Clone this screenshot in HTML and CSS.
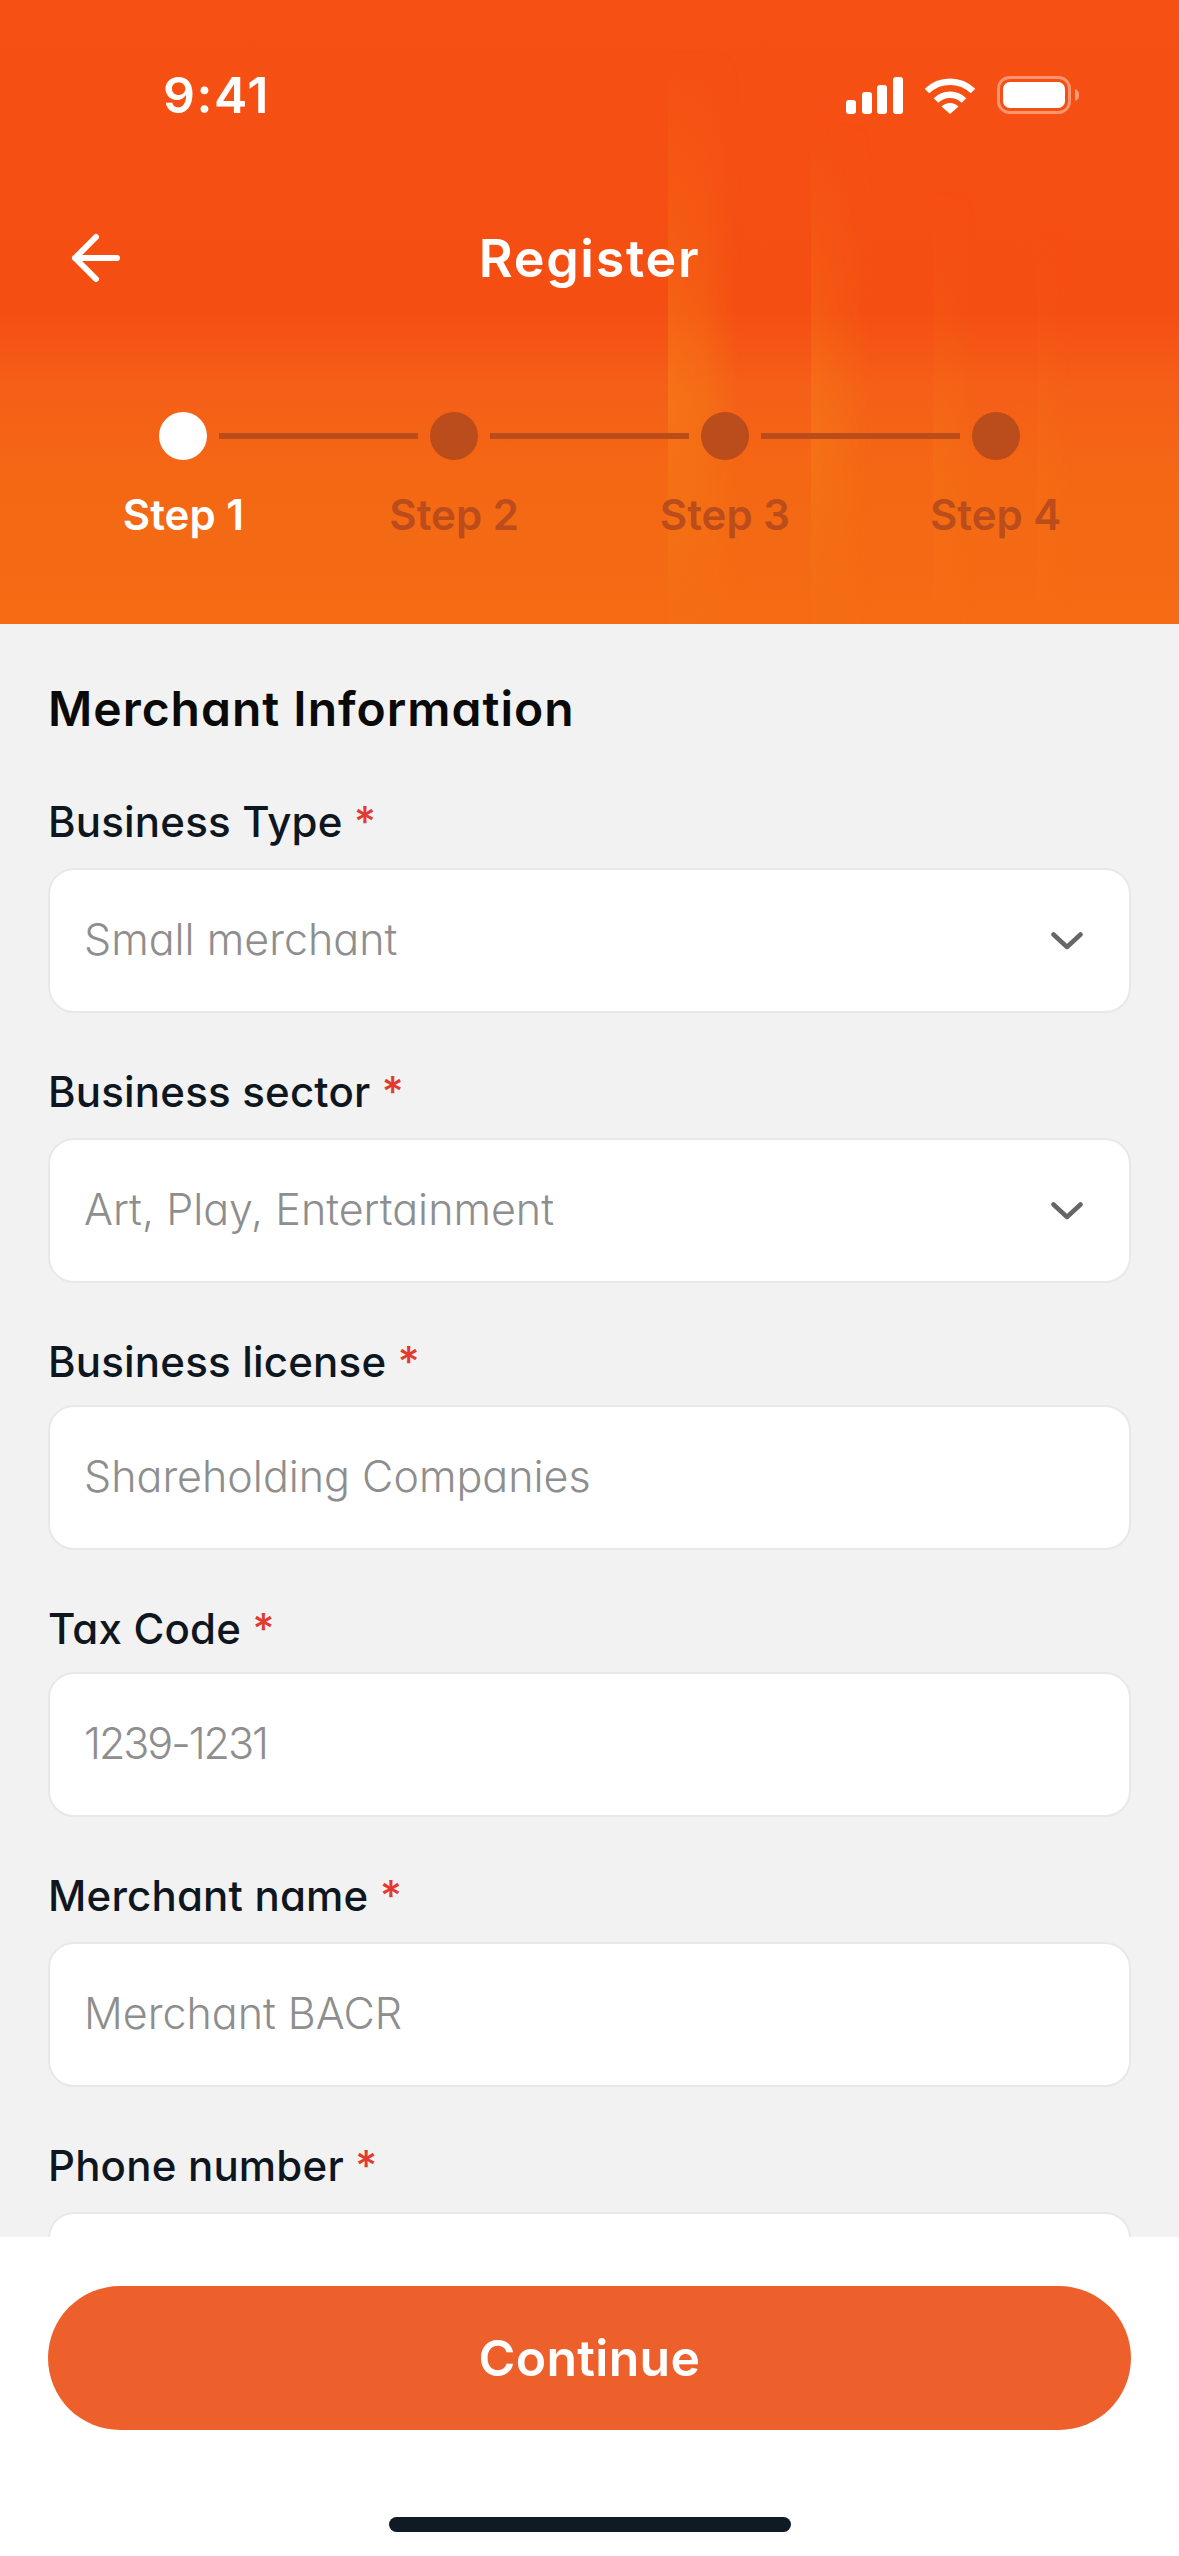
FILE: index.html

```html
<!DOCTYPE html>
<html lang="en">

<head>
    <meta charset="UTF-8">
    <title>Register</title>
    <link rel="stylesheet" href="styles.css">
</head>

<body>
    <div class="screen">
        <header class="hero">
            <div class="streak streak-1"></div>
            <div class="streak streak-2"></div>
            <div class="streak streak-3"></div>
            <div class="streak streak-4"></div>

            <div class="status-bar">
                <span class="time">9:41</span>
                <div class="status-icons">
                    <svg width="57" height="37" viewBox="0 0 57 37" fill="#fff">
                        <rect x="0" y="23" width="10" height="14" rx="3" />
                        <rect x="16" y="15" width="10" height="22" rx="3" />
                        <rect x="31" y="8" width="10" height="29" rx="3" />
                        <rect x="47" y="0" width="10" height="37" rx="3" />
                    </svg>
                    <svg width="52" height="37" viewBox="0 0 52 37">
                        <path d="M3 14 A 33 33 0 0 1 49 14" fill="none" stroke="#fff" stroke-width="6.5" />
                        <path d="M12 23.5 A 20 20 0 0 1 40 23.5" fill="none" stroke="#fff" stroke-width="6.5" />
                        <path d="M17.5 29.5 A 12 12 0 0 1 34.5 29.5 L26 37 Z" fill="#fff" />
                    </svg>
                    <svg width="82" height="38" viewBox="0 0 82 38">
                        <rect x="1.5" y="1.5" width="71" height="35" rx="11" fill="none" stroke="#fff" stroke-opacity="0.4" stroke-width="3" />
                        <rect x="6" y="6" width="62" height="26" rx="7" fill="#fff" />
                        <path d="M78 13 C 81 14 82 16 82 19 C 82 22 81 24 78 25 Z" fill="#fff" fill-opacity="0.45" />
                    </svg>
                </div>
            </div>

            <div class="nav">
                <svg class="back" width="50" height="50" viewBox="0 0 50 50" fill="none" stroke="#fff" stroke-width="6" stroke-linecap="round" stroke-linejoin="round">
                    <path d="M46 25 H4 M25 4 L4 25 L25 46" />
                </svg>
                <h1 class="nav-title">Register</h1>
            </div>

            <div class="stepper">
                <div class="dots">
                    <span class="dot dot-active"></span>
                    <span class="line"></span>
                    <span class="dot"></span>
                    <span class="line"></span>
                    <span class="dot"></span>
                    <span class="line"></span>
                    <span class="dot"></span>
                </div>
                <div class="step-labels">
                    <span class="step-label step-label-active">Step 1</span>
                    <span class="step-label">Step 2</span>
                    <span class="step-label">Step 3</span>
                    <span class="step-label">Step 4</span>
                </div>
            </div>
        </header>

        <main class="form">
            <h2 class="form-title">Merchant Information</h2>

            <div class="field first">
                <div class="label">Business Type <span class="req">*</span></div>
                <div class="input">
                    <span>Small merchant</span>
                    <svg class="chevron" width="32" height="18" viewBox="0 0 32 18" fill="none" stroke="#666" stroke-width="4.5" stroke-linecap="round" stroke-linejoin="round">
                        <path d="M2.5 2.5 L16 15 L29.5 2.5" />
                    </svg>
                </div>
            </div>

            <div class="field">
                <div class="label">Business sector <span class="req">*</span></div>
                <div class="input">
                    <span>Art, Play, Entertainment</span>
                    <svg class="chevron" width="32" height="18" viewBox="0 0 32 18" fill="none" stroke="#666" stroke-width="4.5" stroke-linecap="round" stroke-linejoin="round">
                        <path d="M2.5 2.5 L16 15 L29.5 2.5" />
                    </svg>
                </div>
            </div>

            <div class="field tight">
                <div class="label">Business license <span class="req">*</span></div>
                <div class="input"><span>Shareholding Companies</span></div>
            </div>

            <div class="field tight">
                <div class="label">Tax Code <span class="req">*</span></div>
                <div class="input"><span class="digits">1239-1231</span></div>
            </div>

            <div class="field">
                <div class="label">Merchant name <span class="req">*</span></div>
                <div class="input"><span>Merchant BACR</span></div>
            </div>

            <div class="field">
                <div class="label">Phone number <span class="req">*</span></div>
                <div class="input"></div>
            </div>
        </main>

        <footer class="footer">
            <button class="continue">Continue</button>
            <div class="home-bar"></div>
        </footer>
    </div>
</body>

</html>
```

FILE: styles.css

```css
* {
    margin: 0;
    padding: 0;
    box-sizing: border-box;
}

body {
    width: 1179px;
    height: 2556px;
    overflow: hidden;
    font-family: Inter, "Noto Sans", sans-serif;
    font-feature-settings: "cv11";
    background: #f2f2f2;
}

.screen {
    display: flex;
    flex-direction: column;
    height: 2556px;
}

/* orange header */
.hero {
    position: relative;
    height: 624px;
    flex: none;
    background: linear-gradient(180deg, #f65013 0%, #f54e13 50%, #f55f18 62%, #f46813 78%, #f56c15 100%);
    overflow: hidden;
}

.streak {
    position: absolute;
    bottom: 0;
    -webkit-mask-image: linear-gradient(180deg, transparent 0%, rgba(0, 0, 0, 0.5) 40%, #000 62%, rgba(0, 0, 0, 0.15) 100%);
    mask-image: linear-gradient(180deg, transparent 0%, rgba(0, 0, 0, 0.5) 40%, #000 62%, rgba(0, 0, 0, 0.15) 100%);
}

.streak-1 {
    top: 50px;
    left: 668px;
    width: 72px;
    background: linear-gradient(90deg, rgba(245, 120, 22, 0.8), rgba(245, 120, 22, 0.55) 50%, transparent);
}

.streak-2 {
    top: 120px;
    left: 811px;
    width: 62px;
    background: linear-gradient(90deg, rgba(245, 120, 22, 0.7), rgba(245, 120, 22, 0.35) 50%, transparent);
}

.streak-3 {
    top: 190px;
    left: 933px;
    width: 44px;
    background: linear-gradient(90deg, rgba(245, 120, 22, 0.35), rgba(245, 120, 22, 0.2) 60%, transparent);
}

.streak-4 {
    top: 230px;
    left: 1037px;
    width: 34px;
    background: linear-gradient(90deg, rgba(245, 120, 22, 0.3), transparent);
}

.status-bar {
    position: relative;
    height: 190px;
    padding: 0 100px 0 163px;
    display: flex;
    align-items: center;
    justify-content: space-between;
    color: #fff;
}

.time {
    font-size: 50px;
    font-weight: 600;
    letter-spacing: 1.5px;
}

.status-icons {
    display: flex;
    align-items: center;
    gap: 21px;
}

.nav {
    position: relative;
    height: 136px;
    display: flex;
    align-items: center;
    justify-content: center;
}

.back {
    position: absolute;
    left: 71px;
    top: 43px;
}

.nav-title {
    font-size: 52px;
    font-weight: 600;
    letter-spacing: 1.7px;
    color: #fff;
}

.stepper {
    position: relative;
    padding-top: 86px;
}

.dots {
    display: flex;
    align-items: center;
    gap: 12px;
    padding: 0 159px;
}

.dot {
    flex: none;
    width: 48px;
    height: 48px;
    border-radius: 50%;
    background: #bb4c1b;
}

.dot-active {
    background: #fff;
}

.line {
    flex: 1;
    height: 6px;
    background: #bb4c1b;
}

.step-labels {
    display: grid;
    grid-template-columns: repeat(4, 1fr);
    padding: 0 48px;
    margin-top: 25px;
}

.step-label {
    text-align: center;
    font-size: 42px;
    line-height: 60px;
    font-weight: 600;
    color: #bb4c1b;
}

.step-label-active {
    color: #fff;
}

/* form */
.form {
    flex: 1;
    overflow: hidden;
    padding: 55px 48px 0;
}

.form-title {
    font-size: 48px;
    line-height: 60px;
    font-weight: 600;
    letter-spacing: 1px;
    color: #0a0a0a;
}

.field {
    margin-top: 49px;
}

.field.first {
    margin-top: 53px;
}

.label {
    font-size: 42px;
    line-height: 60px;
    font-weight: 500;
    letter-spacing: 0.2px;
    color: #0e1620;
    margin-bottom: 16px;
}

.field.tight .label {
    margin-bottom: 13px;
}

.req {
    color: #e23a2e;
}

.input {
    height: 145px;
    padding: 0 46px 0 34px;
    display: flex;
    align-items: center;
    justify-content: space-between;
    background: #fff;
    border: 2px solid #e8e8e8;
    border-radius: 26px;
    font-size: 43px;
    font-weight: 300;
    color: #8e8e8e;
}

.input span {
    margin-bottom: 4px;
}

.digits {
    letter-spacing: -2px;
}

/* bottom bar */
.footer {
    flex: none;
    height: 319px;
    padding: 49px 48px 0;
    background: #fff;
}

.continue {
    display: block;
    width: 100%;
    height: 144px;
    border: none;
    border-radius: 72px;
    background: #ee602b;
    color: #fff;
    font-family: inherit;
    font-feature-settings: inherit;
    font-size: 50px;
    font-weight: 600;
    letter-spacing: 0.3px;
}

.home-bar {
    width: 402px;
    height: 15px;
    margin: 87px auto 0;
    border-radius: 8px;
    background: #101a24;
}
```
